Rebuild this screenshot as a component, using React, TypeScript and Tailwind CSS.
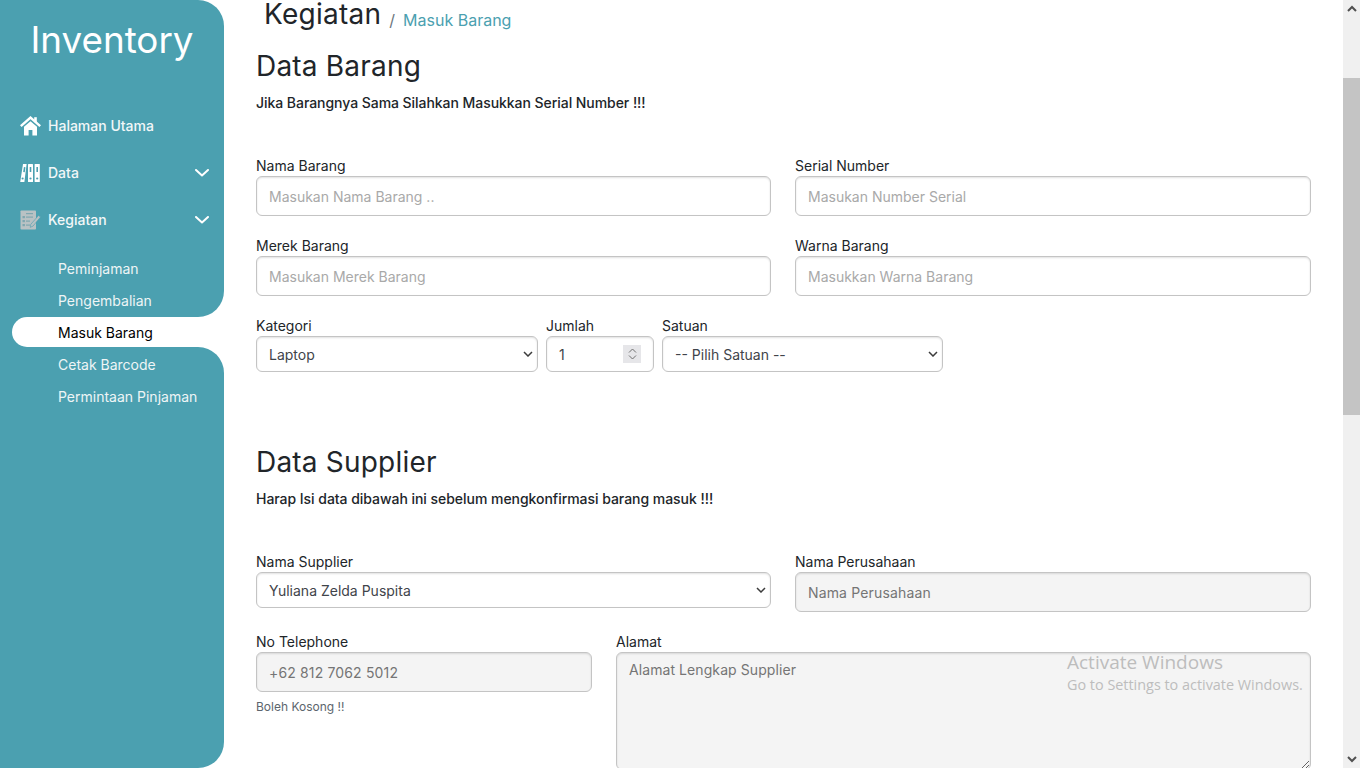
import React from "react";

const font = { fontFamily: "Inter, 'Liberation Sans', sans-serif" };

function Chevron() {
  return (
    <svg width="14" height="8" viewBox="0 0 14 8" fill="none" stroke="#ffffff" strokeWidth="2" strokeLinecap="round" strokeLinejoin="round" className="ml-auto mr-[15px]">
      <path d="M1 1l6 5.5L13 1" />
    </svg>
  );
}

function Home() {
  return (
    <svg width="21" height="20" viewBox="0 0 21 20" className="shrink-0">
      <path d="M0.8 10.2L10.5 1.6l9.7 8.6" fill="none" stroke="#ffffff" strokeWidth="2.4" strokeLinejoin="miter" />
      <rect x="14.2" y="1.2" width="2.6" height="5" fill="#ffffff" />
      <path d="M10.5 5.2l6.5 5.6V19.5h-4.6v-5.6H8.6v5.6H4V10.8z" fill="#ffffff" />
    </svg>
  );
}

function Binders() {
  return (
    <svg width="20" height="20" viewBox="0 0 20 20" className="shrink-0">
      <g fill="#ffffff">
        <path d="M3 1h3.6L4.4 19H0.2z" />
        <rect x="8" y="1" width="5" height="18" rx="0.5" />
        <rect x="14.6" y="1" width="5.2" height="18" rx="0.5" />
      </g>
      <g fill="#4ba0b0">
        <circle cx="2.6" cy="15.5" r="1.1" />
        <circle cx="10.5" cy="15.5" r="1.1" />
        <circle cx="17.2" cy="15.5" r="1.1" />
        <rect x="3.6" y="4" width="1.6" height="5" transform="rotate(8 4 6)" />
        <rect x="9.7" y="4" width="1.6" height="5" />
        <rect x="16.4" y="4" width="1.6" height="5" />
      </g>
    </svg>
  );
}

function Notes() {
  return (
    <svg width="21" height="20" viewBox="0 0 21 20" className="shrink-0">
      <rect x="0.5" y="0.5" width="15.5" height="19" rx="0.8" fill="#b9c2c4" />
      <g fill="#7fa7b0">
        <rect x="2.5" y="6" width="2.4" height="2.2" />
        <rect x="2.5" y="10" width="2.4" height="2.2" />
        <rect x="2.5" y="14" width="2.4" height="2.2" />
        <rect x="6" y="3" width="7" height="1.2" />
        <rect x="6" y="6.5" width="7" height="1.2" />
        <rect x="6" y="10.5" width="4" height="1.2" />
        <rect x="6" y="14.5" width="4" height="1.2" />
      </g>
      <path d="M18.5 5.5l2 1.6-7.5 9-2.8 1.2.6-3z" fill="#b9c2c4" stroke="#4ba0b0" strokeWidth="0.6" />
    </svg>
  );
}

function MenuRow({ icon, label, chevron }: { icon: React.ReactNode; label: string; chevron?: boolean }) {
  return (
    <div className="flex h-[47px] items-center gap-[8px] pl-[20px] text-[14px] font-medium text-[#f2f7f8]">
      <span className="flex w-[20px] justify-center">{icon}</span>
      <span>{label}</span>
      {chevron && <Chevron />}
    </div>
  );
}

function SubRow({ label }: { label: string }) {
  return <div className="flex h-[32px] items-center pl-[58px] text-[14px] text-[#eef5f6]">{label}</div>;
}

function Sidebar() {
  return (
    <aside className="flex h-[768px] w-[224px] shrink-0 flex-col bg-white">
      <div className="rounded-r-[26px] bg-[#4ba0b0] pb-[1px]">
        <div className="flex h-[80px] items-center justify-center text-[36.8px] leading-none text-white">Inventory</div>
        <div className="mt-[22px]">
          <MenuRow icon={<Home />} label="Halaman Utama" />
          <MenuRow icon={<Binders />} label="Data" chevron />
          <MenuRow icon={<Notes />} label="Kegiatan" chevron />
        </div>
        <div className="mt-[9px]">
          <SubRow label="Peminjaman" />
          <SubRow label="Pengembalian" />
        </div>
      </div>
      <div className="bg-[#4ba0b0] pl-[12px]">
        <div className="flex h-[30px] items-center rounded-l-[15px] bg-white pl-[46px] text-[14px] text-black">Masuk Barang</div>
      </div>
      <div className="flex-1 rounded-r-[26px] bg-[#4ba0b0] pt-[1px]">
        <SubRow label="Cetak Barcode" />
        <SubRow label="Permintaan Pinjaman" />
      </div>
    </aside>
  );
}

const fieldBase =
  "w-full rounded-[6px] border border-[#c4c4c4] px-[12px] text-[14px] shadow-[inset_0_1px_2px_rgba(0,0,0,0.12)] outline-none";

function Label({ text }: { text: string }) {
  return <label className="block h-[20px] text-[14px] leading-[20px] text-[#212529]">{text}</label>;
}

function TextField({ label, placeholder, muted }: { label: string; placeholder: string; muted?: boolean }) {
  return (
    <div>
      <Label text={label} />
      <input
        placeholder={placeholder}
        readOnly={muted}
        className={`${fieldBase} h-[40px] ${muted ? "bg-[#f4f4f4] placeholder:tracking-[0.15px] placeholder:text-[#757575]" : "bg-white placeholder:text-[#a9a9a9]"}`}
        style={font}
      />
    </div>
  );
}

function SelectField({ label, value, className }: { label: string; value: string; className?: string }) {
  return (
    <div className={className}>
      <Label text={label} />
      <div className="relative">
        <select className={`${fieldBase} h-[36px] appearance-none bg-white text-[#3f444a]`} defaultValue={value} style={font}>
          <option>{value}</option>
        </select>
        <svg width="10" height="6" viewBox="0 0 10 6" fill="none" stroke="#3c3c3c" strokeWidth="1.5" className="pointer-events-none absolute right-[5px] top-[15px]">
          <path d="M1 1l4 4 4-4" />
        </svg>
      </div>
    </div>
  );
}

function Main() {
  return (
    <main className="min-w-0 flex-1 pl-[32px] pr-[32px]">
      <div className="mt-[-4px] flex h-[36px] items-end pl-[8px]">
        <span className="text-[28px] leading-[36px] tracking-[0.25px] text-[#212529]">Kegiatan</span>
        <span className="ml-[8px] text-[16px] leading-[24px] text-[#6c757d]">/</span>
        <span className="ml-[8px] text-[16px] leading-[24px] text-[#4ba0b0]">Masuk Barang</span>
      </div>

      <h2 className="mt-[17px] text-[28px] font-normal leading-[34px] tracking-[0.2px] text-[#212529]">Data Barang</h2>
      <p className="mt-[10px] text-[14px] font-medium leading-[20px] tracking-[-0.05px] text-[#212529]">Jika Barangnya Sama Silahkan Masukkan Serial Number !!!</p>

      <div className="mt-[43px] grid grid-cols-[515px_516px] gap-x-[24px] gap-y-[20px]">
        <TextField label="Nama Barang" placeholder="Masukan Nama Barang .." />
        <TextField label="Serial Number" placeholder="Masukan Number Serial" />
        <TextField label="Merek Barang" placeholder="Masukan Merek Barang" />
        <TextField label="Warna Barang" placeholder="Masukkan Warna Barang" />
      </div>

      <div className="mt-[20px] flex gap-[8px]">
        <SelectField label="Kategori" value="Laptop" className="w-[282px]" />
        <div className="w-[108px]">
          <Label text="Jumlah" />
          <div className="relative">
            <input defaultValue="1" className={`${fieldBase} h-[36px] bg-white text-[#3f444a]`} style={font} />
            <span className="absolute right-[13px] top-[9px] flex h-[18px] w-[18px] flex-col items-center justify-center gap-[2px] bg-[#e6e6e9]">
              <svg width="9" height="5" viewBox="0 0 9 5" fill="none" stroke="#6f6f6f" strokeWidth="1"><path d="M1 4.5l3.5-3.5 3.5 3.5" /></svg>
              <svg width="9" height="5" viewBox="0 0 9 5" fill="none" stroke="#6f6f6f" strokeWidth="1"><path d="M1 .5l3.5 3.5 3.5-3.5" /></svg>
            </span>
          </div>
        </div>
        <SelectField label="Satuan" value="-- Pilih Satuan --" className="w-[281px]" />
      </div>

      <h2 className="mt-[73px] text-[28px] font-normal leading-[34px] tracking-[0.2px] text-[#212529]">Data Supplier</h2>
      <p className="mt-[10px] text-[14px] font-medium leading-[20px] tracking-[-0.04px] text-[#212529]">Harap Isi data dibawah ini sebelum mengkonfirmasi barang masuk !!!</p>

      <div className="mt-[43px] grid grid-cols-[515px_516px] gap-x-[24px]">
        <SelectField label="Nama Supplier" value="Yuliana Zelda Puspita" />
        <TextField label="Nama Perusahaan" placeholder="Nama Perusahaan" muted />
      </div>

      <div className="mt-[20px] flex gap-[24px]">
        <div className="w-[336px] shrink-0">
          <TextField label="No Telephone" placeholder="+62 812 7062 5012" muted />
          <p className="mt-[7px] text-[12px] leading-[16px] text-[#5c656d]">Boleh Kosong !!</p>
        </div>
        <div className="flex-1">
          <Label text="Alamat" />
          <textarea
            readOnly
            placeholder="Alamat Lengkap Supplier"
            className={`${fieldBase} block h-[118px] bg-[#f4f4f4] py-[6px] placeholder:tracking-[0.08px] placeholder:text-[#757575]`}
            style={font}
          />
        </div>
      </div>
    </main>
  );
}

function Scrollbar() {
  return (
    <div className="flex h-[768px] w-[17px] shrink-0 flex-col bg-[#f0f0f0]">
      <div className="flex h-[17px] items-center justify-center">
        <svg width="10" height="7" viewBox="0 0 10 7" fill="none" stroke="#505050" strokeWidth="2"><path d="M1 6l4-4 4 4" /></svg>
      </div>
      <div className="mt-[61px] h-[337px] bg-[#c4c4c4]" />
      <div className="mt-auto flex h-[17px] items-center justify-center">
        <svg width="10" height="7" viewBox="0 0 10 7" fill="none" stroke="#505050" strokeWidth="2"><path d="M1 1l4 4 4-4" /></svg>
      </div>
    </div>
  );
}

export default function App() {
  return (
    <div className="relative flex h-[768px] w-[1360px] overflow-hidden bg-white" style={font}>
      <Sidebar />
      <Main />
      <Scrollbar />
      <div className="pointer-events-none absolute left-[1067px] top-[650px] text-[#bdbdbd]" style={{ fontFamily: "'Open Sans', sans-serif" }}>
        <div className="text-[19px] leading-[25px]">Activate Windows</div>
        <div className="text-[14.4px] leading-[20px]">Go to Settings to activate Windows.</div>
      </div>
    </div>
  );
}
